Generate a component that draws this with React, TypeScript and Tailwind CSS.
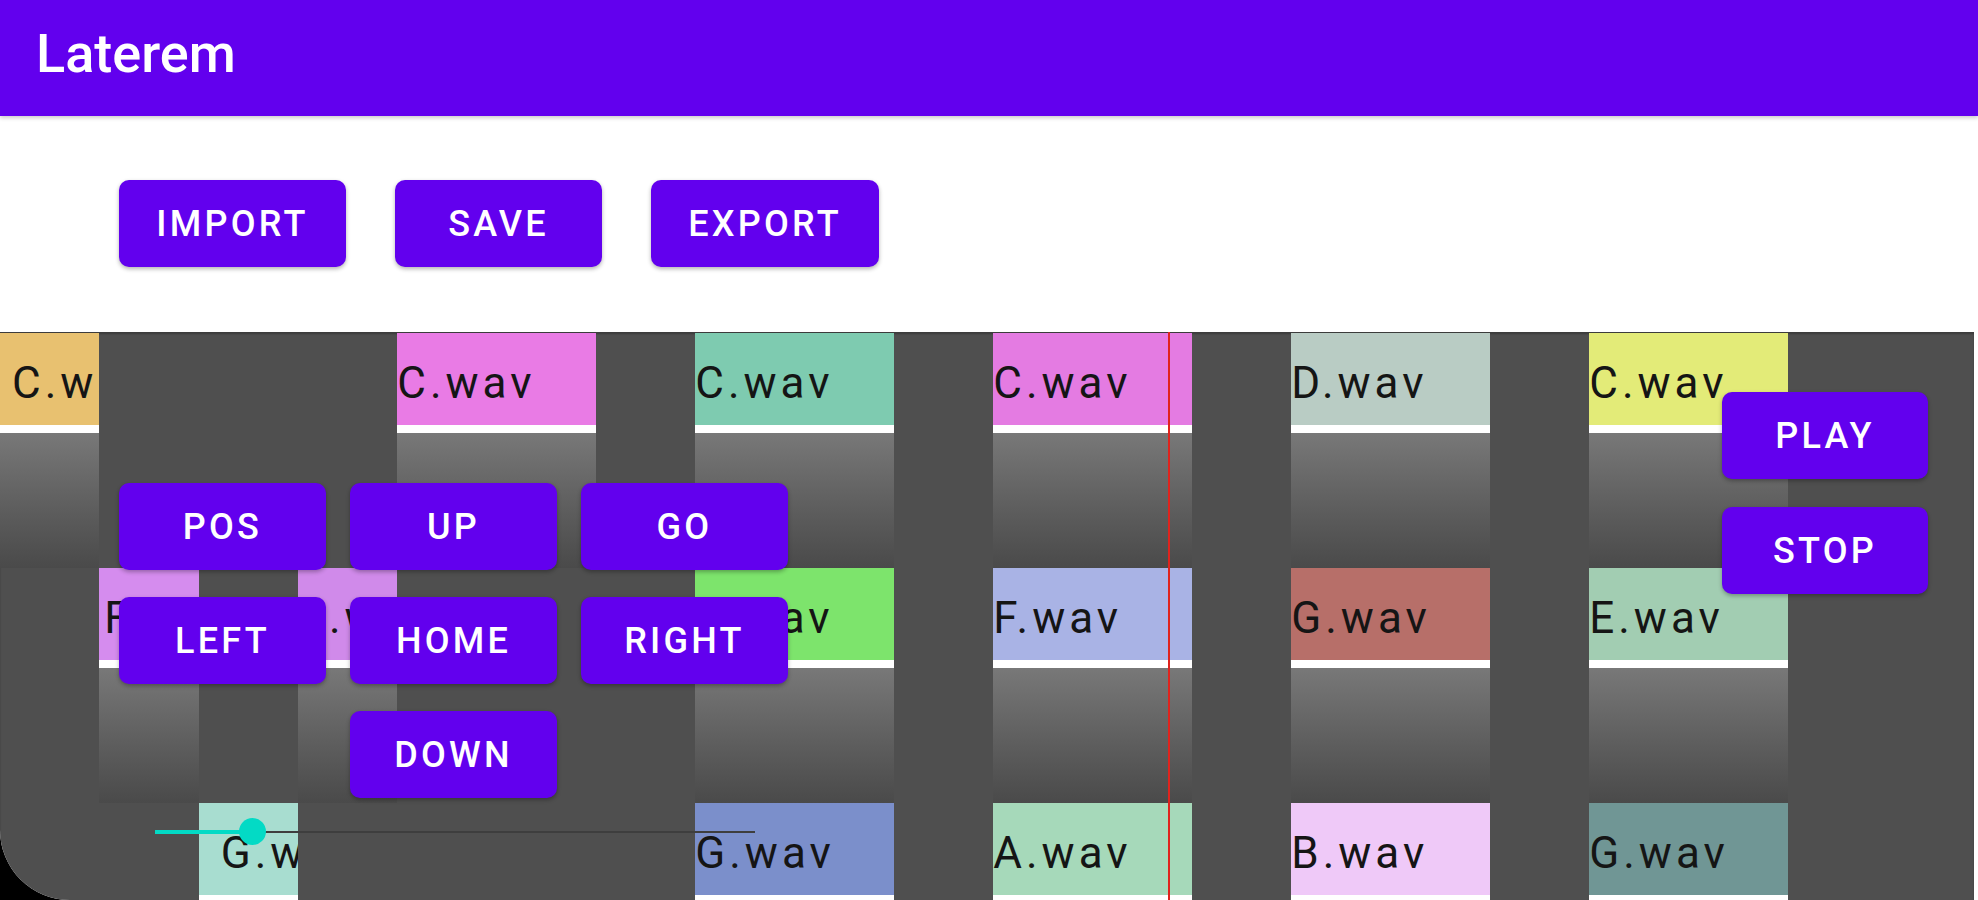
import type React from "react";

type Clip = {
  name: string;
  col: string; // col-start class
  span: string; // col-span class
  color: string; // bg class
  indent: string; // text offset class
};

// three tracks of clips, positions in 99.33px steps
const TRACKS: Clip[][] = [
  [
    { name: "C.wav", col: "col-start-1", span: "col-span-1", color: "bg-[#e8c170]", indent: "pl-[12px]" },
    { name: "C.wav", col: "col-start-5", span: "col-span-2", color: "bg-[#e97be5]", indent: "pl-0" },
    { name: "C.wav", col: "col-start-8", span: "col-span-2", color: "bg-[#7ecbb0]", indent: "pl-0" },
    { name: "C.wav", col: "col-start-11", span: "col-span-2", color: "bg-[#e47be2]", indent: "pl-0" },
    { name: "D.wav", col: "col-start-14", span: "col-span-2", color: "bg-[#b9ccc4]", indent: "pl-0" },
    { name: "C.wav", col: "col-start-17", span: "col-span-2", color: "bg-[#e3eb78]", indent: "pl-0" },
  ],
  [
    { name: "F.wav", col: "col-start-2", span: "col-span-1", color: "bg-[#d58cee]", indent: "pl-[5px]" },
    { name: "E.wav", col: "col-start-4", span: "col-span-1", color: "bg-[#d08aea]", indent: "pl-[2px]" },
    { name: "A.wav", col: "col-start-8", span: "col-span-2", color: "bg-[#7de46c]", indent: "pl-0" },
    { name: "F.wav", col: "col-start-11", span: "col-span-2", color: "bg-[#a9b3e5]", indent: "pl-0" },
    { name: "G.wav", col: "col-start-14", span: "col-span-2", color: "bg-[#b76f69]", indent: "pl-0" },
    { name: "E.wav", col: "col-start-17", span: "col-span-2", color: "bg-[#a2cdb2]", indent: "pl-0" },
  ],
  [
    { name: "G.wav", col: "col-start-3", span: "col-span-1", color: "bg-[#a8ddd0]", indent: "pl-[22px]" },
    { name: "G.wav", col: "col-start-8", span: "col-span-2", color: "bg-[#7b8fcb]", indent: "pl-0" },
    { name: "A.wav", col: "col-start-11", span: "col-span-2", color: "bg-[#a6d9ba]", indent: "pl-0" },
    { name: "B.wav", col: "col-start-14", span: "col-span-2", color: "bg-[#efc9f8]", indent: "pl-0" },
    { name: "G.wav", col: "col-start-17", span: "col-span-2", color: "bg-[#709695]", indent: "pl-0" },
  ],
];

const ROW_START = ["row-start-1", "row-start-2", "row-start-3"];

function Btn({
  label,
  className = "",
}: {
  label: string;
  className?: string;
}) {
  return (
    <button
      className={`flex h-[87px] items-center justify-center rounded-[10px] bg-[#6200ee] text-[36px] font-medium uppercase tracking-[0.09em] text-white shadow-[0_2px_4px_rgba(0,0,0,0.3)] ${className}`}
    >
      {label}
    </button>
  );
}

function ClipBlock({ clip, row }: { clip: Clip; row: number }) {
  return (
    <div className={`${clip.col} ${clip.span} ${ROW_START[row]} flex flex-col overflow-hidden`}>
      {/* label */}
      <div
        className={`h-[92px] shrink-0 overflow-hidden whitespace-nowrap pt-[25px] text-[44px] leading-[1.17] tracking-[4px] text-[#151515] ${clip.color} ${clip.indent}`}
      >
        {clip.name}
      </div>
      <div className="h-[8px] shrink-0 bg-white" />
      {/* waveform lane */}
      <div className="h-[135px] shrink-0 bg-linear-to-b from-[#787878] to-[#4a4a4a]" />
    </div>
  );
}

export default function App() {
  return (
    <div className="h-[900px] w-[1978px] overflow-hidden bg-black font-['Roboto','Liberation_Sans',sans-serif]">
      <div className="flex h-full flex-col overflow-hidden rounded-bl-[70px] bg-white">
        {/* App bar */}
        <header className="relative z-10 h-[116px] shrink-0 bg-[#6200ee] pl-[36px] pt-[22px] shadow-[0_2px_4px_rgba(0,0,0,0.2)]">
          <h1 className="text-[54px] font-medium leading-[1.17] text-white">Laterem</h1>
        </header>

        {/* File actions */}
        <div className="flex h-[216px] shrink-0 items-start gap-[49px] pl-[119px] pt-[64px]">
          <Btn label="Import" className="w-[227px]" />
          <Btn label="Save" className="w-[207px]" />
          <Btn label="Export" className="w-[228px]" />
        </div>

        {/* Sequencer */}
        <div className="relative mr-[4px] flex-1 overflow-hidden bg-[#4f4f4f] shadow-[inset_0_2px_2px_rgba(0,0,0,0.25)]">
          <div className="grid grid-cols-[repeat(20,99.33px)] grid-rows-[235px_235px_235px] pt-px">
            {TRACKS.map((track, r) =>
              track.map((clip) => <ClipBlock key={`${r}-${clip.col}`} clip={clip} row={r} />)
            )}
          </div>

          {/* playhead */}
          <div className="absolute bottom-0 left-[1168px] top-0 w-[2px] bg-[#e0231d]" />

          {/* nav pad */}
          <div className="absolute left-[119px] top-[151px] grid grid-cols-[207px_207px_207px] grid-rows-[87px_87px_87px] gap-x-[24px] gap-y-[27px]">
            <Btn label="Pos" />
            <Btn label="Up" />
            <Btn label="Go" />
            <Btn label="Left" />
            <Btn label="Home" />
            <Btn label="Right" />
            <Btn label="Down" className="col-start-2" />
          </div>

          {/* transport */}
          <div className="absolute left-[1722px] top-[60px] flex flex-col gap-[28px]">
            <Btn label="Play" className="w-[206px]" />
            <Btn label="Stop" className="w-[206px]" />
          </div>

          {/* zoom slider */}
          <div className="absolute left-[155px] top-[486px] flex h-[28px] w-[600px] items-center">
            <div className="h-[4px] w-[97px] bg-[#03dac5]" />
            <div className="h-[2px] flex-1 bg-[#3e3e3e]" />
            <div className="absolute left-[84px] top-0 h-[27px] w-[27px] rounded-full bg-[#03dac5]" />
          </div>
        </div>
      </div>
    </div>
  );
}
